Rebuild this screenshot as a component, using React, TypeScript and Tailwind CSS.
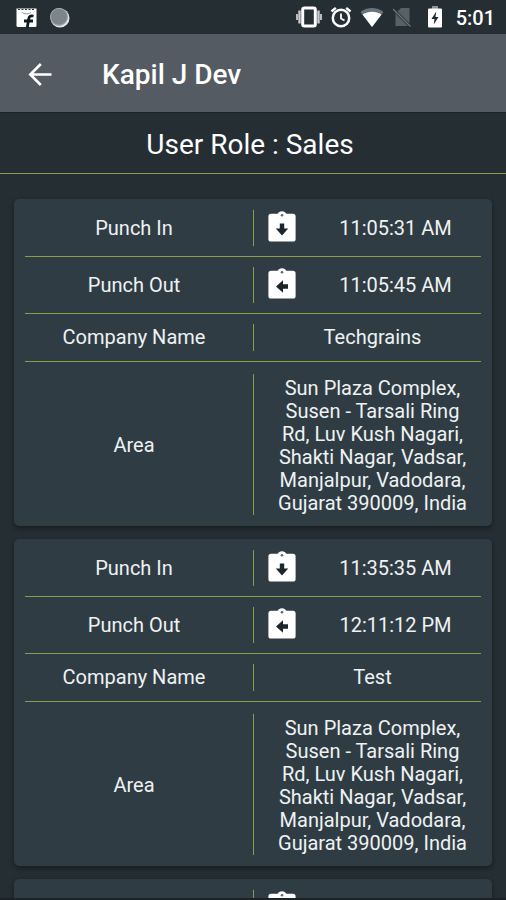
import type { ReactNode } from 'react';

type Punch = {
  punchIn: string;
  punchOut: string;
  company: string;
  area: string;
};

const AREA = 'Sun Plaza Complex, Susen - Tarsali Ring Rd, Luv Kush Nagari, Shakti Nagar, Vadsar, Manjalpur, Vadodara, Gujarat 390009, India';

const punches: Punch[] = [
  { punchIn: '11:05:31 AM', punchOut: '11:05:45 AM', company: 'Techgrains', area: AREA },
  { punchIn: '11:35:35 AM', punchOut: '12:11:12 PM', company: 'Test', area: AREA },
  { punchIn: '12:15:20 PM', punchOut: '12:48:09 PM', company: 'Test', area: AREA },
];

// Clipboard with an arrow: down for punch in, left for punch out
function PunchIcon({ direction }: { direction: 'in' | 'out' }) {
  return (
    <svg viewBox="0 0 36 36" className="size-9 shrink-0" aria-hidden="true">
      <path
        fill="#fff"
        d="M7 3.800h6.700C14.300 2.200 16 1.200 18 1.200s3.700 1 4.300 2.600H29A2.600 2.600 0 0 1 31.600 6.400v22.500a2.600 2.600 0 0 1-2.600 2.600H7a2.600 2.600 0 0 1-2.600-2.600V6.400A2.600 2.600 0 0 1 7 3.800z"
      />
      <circle cx="18" cy="5.200" r="1.300" fill="#5d6a72" />
      <path
        fill="#1b262b"
        d="M15.800 13.500h4.400v5h4L18 25.500 11.800 18.500h4z"
        transform={direction === 'out' ? 'rotate(90 18 19.500)' : undefined}
      />
    </svg>
  );
}

function StatusBar() {
  return (
    <div className="flex h-[34px] shrink-0 items-center justify-between pr-[11px] pl-4 text-white">
      <div className="flex items-center gap-3">
        <svg viewBox="0 0 21 21" className="size-[21px]" aria-hidden="true">
          <path fill="#fff" d="M.5 1.500h20v17a1.500 1.500 0 0 1-1.500 1.500H2A1.500 1.500 0 0 1 .5 18.500z" />
          <path d="M2 2.500h17" stroke="#26323a" strokeWidth="1.200" strokeDasharray="2 1.500" />
          <path d="M6 5c1 2.500 8 2.500 9 0" fill="none" stroke="#8d979c" strokeWidth="1" />
          <path d="M17.500 9c-3-.6-4.300.2-4.700 2.500l-1.500 9M8 14h9" fill="none" stroke="#111a1e" strokeWidth="2.800" />
        </svg>
        <svg viewBox="0 0 21 21" className="size-[21px]" aria-hidden="true">
          <circle cx="11" cy="11" r="9.500" fill="#e4e7e8" />
          <circle cx="10" cy="9.800" r="8.900" fill="#7c8588" />
          <circle cx="10" cy="9.800" r="8.400" fill="none" stroke="#a0a7a9" strokeWidth="1" />
        </svg>
      </div>
      <div className="flex items-center">
        <svg viewBox="0 0 26 22" className="mr-2 h-[22px] w-[26px]" aria-hidden="true">
          <rect x="6.700" y="2" width="12.600" height="18" rx="1.500" fill="none" stroke="#fff" strokeWidth="3" />
          <path d="M3.500 4.500v13M22.500 4.500v13" stroke="#c9cdcf" strokeWidth="2.400" />
          <path d="M1 8v6M25 8v6" stroke="#c9cdcf" strokeWidth="1.800" />
        </svg>
        <svg viewBox="0 0 22 22" className="mr-2 size-[22px]" fill="none" stroke="#fff" aria-hidden="true">
          <circle cx="11" cy="12" r="8.200" strokeWidth="2.500" />
          <path d="M11 7.500v5l3.500 2" strokeWidth="1.800" />
          <path d="M1.500 5.500l4.300-3.700M20.500 5.500l-4.300-3.700" strokeWidth="2.400" />
        </svg>
        <svg viewBox="0 0 24 20" className="mr-2 h-5 w-6" aria-hidden="true">
          <path fill="#69757b" d="M12 20L.5 5C7-.2 17-.2 23.500 5z" />
          <path fill="#fff" d="M12 20L2.500 7.500c5.500-3.800 13.500-3.800 19 0z" />
        </svg>
        <svg viewBox="0 0 20 20" className="mr-4 size-5" aria-hidden="true">
          <path fill="#566168" d="M9 1h8.500v18H3.500V6.500z" />
          <path d="M1 2l17.500 17.500" stroke="#232e34" strokeWidth="3" />
          <path d="M1 2l17.500 17.500" stroke="#6d777d" strokeWidth="1.200" />
        </svg>
        <svg viewBox="0 0 14 22" className="mr-[14px] h-[22px] w-[14px]" aria-hidden="true">
          <path fill="#8c9499" d="M4 0h6v3H4z" />
          <rect x="0" y="2.500" width="14" height="19" rx="1" fill="#fff" />
          <path fill="#1d282d" d="M8.200 5.500L3.500 13h3l-.8 5.500L10.500 11h-3z" />
        </svg>
        <span className="pt-0.5 text-[20px] leading-6 font-medium">5:01</span>
      </div>
    </div>
  );
}

function Row({ label, children, last = false }: { label: string; children: ReactNode; last?: boolean }) {
  const line = last ? '' : 'border-b border-[#8d9c49]';
  return (
    <tr>
      <th scope="row" className={`w-1/2 pr-[10px] text-center font-normal ${last ? 'pt-1' : ''} ${line}`}>
        {label}
      </th>
      <td className={`${last ? 'pt-3' : 'pt-[10px]'} pb-[10px] text-center ${line}`}>
        <div className="border-l border-[#8d9c49] pl-[10px]">{children}</div>
      </td>
    </tr>
  );
}

function TimeValue({ direction, time }: { direction: 'in' | 'out'; time: string }) {
  return (
    <div className="flex items-center gap-[10px]">
      <PunchIcon direction={direction} />
      <span className="flex-1">{time}</span>
    </div>
  );
}

function PunchCard({ punch }: { punch: Punch }) {
  return (
    <article className="rounded-[5px] bg-[#303c44] px-[11px] py-px shadow-[0_2px_5px_rgba(0,0,0,0.4)]">
      <table className="w-full table-fixed border-separate border-spacing-0 text-[20px] leading-[23px] text-[#eef2f3]">
        <tbody>
          <Row label="Punch In">
            <TimeValue direction="in" time={punch.punchIn} />
          </Row>
          <Row label="Punch Out">
            <TimeValue direction="out" time={punch.punchOut} />
          </Row>
          <Row label="Company Name">
            <p className="leading-[27px]">{punch.company}</p>
          </Row>
          <Row label="Area" last>
            <p className="px-3 pt-[3px]">{punch.area}</p>
          </Row>
        </tbody>
      </table>
    </article>
  );
}

export default function App() {
  return (
    <div className="flex h-screen flex-col overflow-hidden border-b-2 border-[#1b2327] bg-[#242e33] font-['Roboto',sans-serif]">
      <StatusBar />
      <header className="flex h-[79px] shrink-0 items-center border-b border-[#1a2429] bg-[#545b62] pt-1 pl-7 text-white">
        <button type="button" aria-label="Back" className="mr-[50px]">
          <svg viewBox="0 0 24 24" className="size-6" fill="none" stroke="#fff" strokeWidth="2.600" aria-hidden="true">
            <path d="M23.500 11.500H2.500M12.800 1L2.300 11.500l10.500 10.500" />
          </svg>
        </button>
        <h1 className="text-[28px] leading-8 font-medium">Kapil J Dev</h1>
      </header>
      <h2 className="shrink-0 border-b border-[#8d9c49] pt-4 pr-[6px] pb-3 text-center text-[28px] leading-8 text-white">
        User Role : Sales
      </h2>
      <main className="flex flex-1 flex-col gap-[13px] overflow-y-auto px-[14px] pt-[25px] pb-[13px] [scrollbar-width:none]">
        {punches.map((punch) => (
          <PunchCard key={punch.punchIn} punch={punch} />
        ))}
      </main>
    </div>
  );
}
